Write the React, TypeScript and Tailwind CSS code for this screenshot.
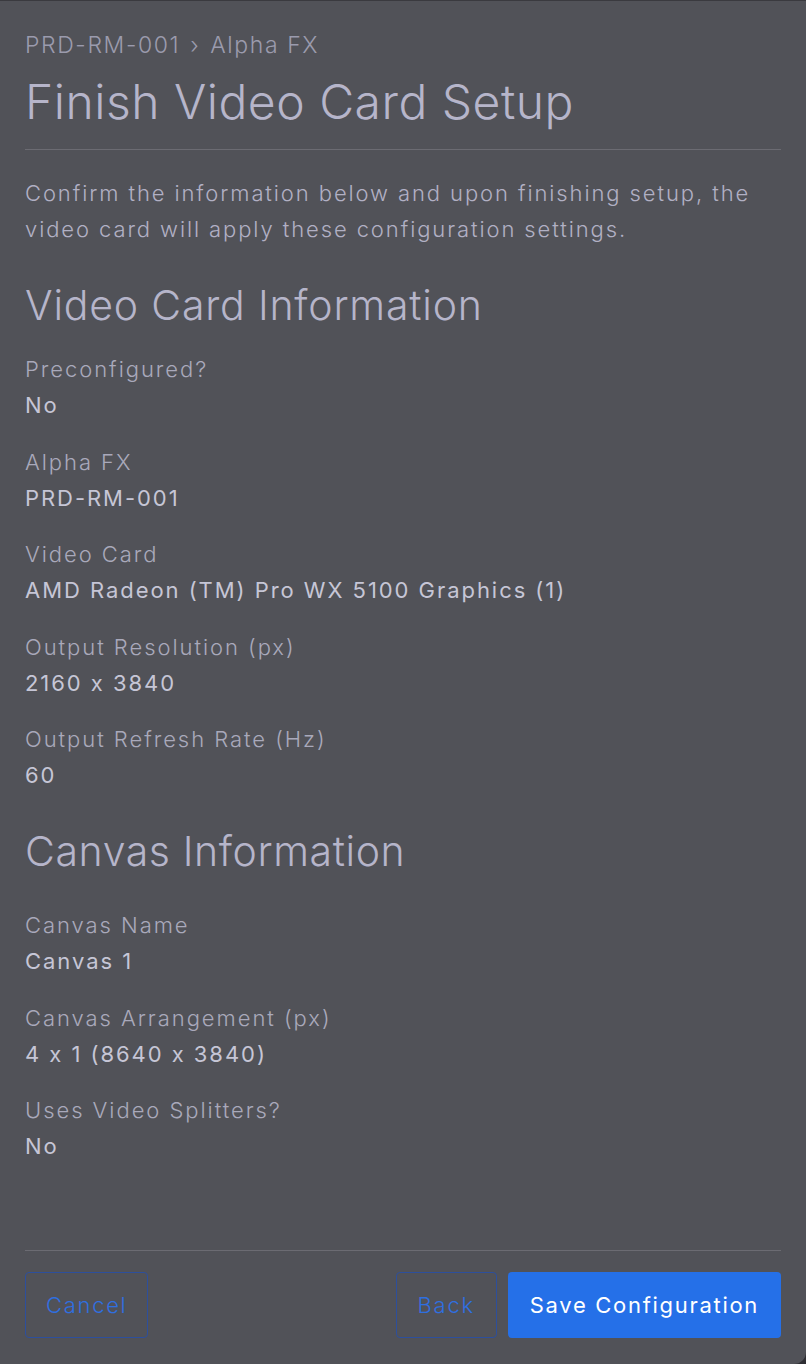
import React from "react"

const font = "font-['Inter','Noto_Sans',sans-serif]"

type Field = { label: string; value: string }

const videoCard: Field[] = [
  { label: "Preconfigured?", value: "No" },
  { label: "Alpha FX", value: "PRD-RM-001" },
  { label: "Video Card", value: "AMD Radeon (TM) Pro WX 5100 Graphics (1)" },
  { label: "Output Resolution (px)", value: "2160 x 3840" },
  { label: "Output Refresh Rate (Hz)", value: "60" },
]

const canvas: Field[] = [
  { label: "Canvas Name", value: "Canvas 1" },
  { label: "Canvas Arrangement (px)", value: "4 x 1 (8640 x 3840)" },
  { label: "Uses Video Splitters?", value: "No" },
]

const FieldList: React.FC<{ fields: Field[] }> = ({ fields }) => (
  <dl className="flex flex-col gap-[20.5px]">
    {fields.map(f => (
      <div key={f.label} className="text-[22px] leading-[36px] tracking-[1.95px]">
        <dt className="font-light text-[#a9a9bb]">{f.label}</dt>
        <dd className="text-[#c6c6d6]">{f.value}</dd>
      </div>
    ))}
  </dl>
)

const App: React.FC = () => {
  return (
    <div className={`${font} bg-[#2e2e33] [font-feature-settings:'calt'_0]`}>
      <div className="flex h-[1364px] flex-col rounded-br-[12px] border-t border-[#3a3a3f] bg-[#515258] px-[25px]">
        <div className="flex-1">
          <div className="pt-[28px] text-[23px] font-light leading-[32px] tracking-[1.6px] text-[#9b9bad]">
            PRD-RM-001 <span className="mx-[2px]">›</span> Alpha FX
          </div>
          <h1 className="mt-[13px] text-[48px] font-light leading-[56px] tracking-[0.5px] text-[#b6b5ca]">
            Finish Video Card Setup
          </h1>
          <hr className="mt-[19px] border-[#6b6b72]" />

          <p className="mt-[25px] text-[22px] font-light leading-[36px] tracking-[1.9px] text-[#b1b0c4]">
            Confirm the information below and upon finishing setup, the video
            card will apply these configuration settings.
          </p>

          <h2 className="mt-[34px] text-[41px] font-light leading-[48px] tracking-[0.8px] text-[#b6b5ca]">
            Video Card Information
          </h2>
          <div className="mt-[22px]">
            <FieldList fields={videoCard} />
          </div>

          <h2 className="mt-[34px] text-[41px] font-light leading-[48px] tracking-[0.6px] text-[#b6b5ca]">
            Canvas Information
          </h2>
          <div className="mt-[32px]">
            <FieldList fields={canvas} />
          </div>
        </div>

        <div className="border-t border-[#6b6b72] pt-[21px] pb-[26px]">
          <div className="flex items-center text-[22px] tracking-[1.7px]">
            <button className="h-[66px] rounded-[4px] border border-[#2d4f9c] px-[20px] font-light text-[#2f6fe0]">
              Cancel
            </button>
            <div className="flex-1" />
            <button className="h-[66px] rounded-[4px] border border-[#2d4f9c] px-[21px] font-light text-[#2f6fe0]">
              Back
            </button>
            <button className="ml-[11px] h-[66px] rounded-[4px] bg-[#2570e8] px-[22px] text-white">
              Save Configuration
            </button>
          </div>
        </div>
      </div>
    </div>
  )
}

export default App
